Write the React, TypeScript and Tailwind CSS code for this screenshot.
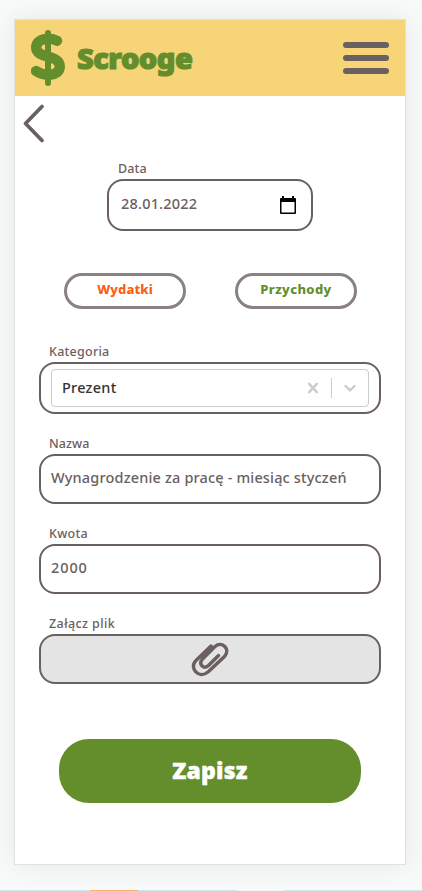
import React from 'react';

const label = 'block h-[20px] pl-[10px] text-[12.5px] leading-[20px] font-medium';
const box = 'flex w-full items-center rounded-[16px] border-2 border-[#6b6060]';

function DollarLogo() {
  return (
    <svg width="34" height="56" viewBox="0 0 34 56" fill="none" stroke="#648e2c" strokeLinecap="round" strokeLinejoin="round">
      <path d="M17 3V53" strokeWidth="6" />
      <path d="M26 10.800C20 7.500 5.200 7.500 5.200 17.500C5.200 29 28.800 24 28.800 36.500C28.800 46.500 13 46.500 5 41" strokeWidth="10.400" />
    </svg>
  );
}

function Calendar() {
  return (
    <svg width="16" height="18" viewBox="0 0 16 18">
      <path fill="#000" fillRule="evenodd" d="M2 0H4V2H12V0H14V2H15Q16 2 16 3V17Q16 18 15 18H1Q0 18 0 17V3Q0 2 1 2H2ZM1.500 6V16.500H14.500V6Z" />
    </svg>
  );
}

function Paperclip() {
  return (
    <svg width="38" height="36" viewBox="0 0 38 36" fill="none" stroke="#6b6060" strokeWidth="3.500" strokeLinecap="round" strokeLinejoin="round">
      <path d="M20 5L5 19.500C-2.500 27 8 38.500 17 31L33.500 15.500C40 8 31 -0.500 24 5.500L11.500 18C7 23.500 13 29 17.500 24.500L27.500 14.500" />
    </svg>
  );
}

export default function App() {
  return (
    <div className="flex h-[891px] w-[422px] flex-col overflow-hidden bg-[#f8faf9] font-['Noto_Sans','Open_Sans',sans-serif] text-[#6b6060]">
      <div className="mt-[19px] ml-[14px] flex h-[846px] w-[392px] shrink-0 flex-col border border-[#e0e1e1] bg-white shadow-[0_0_24px_rgba(0,0,0,0.08)]">
        <header className="flex h-[76px] shrink-0 items-center bg-[#f7d478] pr-4 pl-4">
          <DollarLogo />
          <span className="ml-[12px] text-[29px] leading-[40px] font-black tracking-[-0.5px] text-[#648e2c] [-webkit-text-stroke:1.2px_#648e2c]">Scrooge</span>
          <div className="ml-auto flex flex-col gap-[7px]">
            <i className="h-[6px] w-[46px] rounded-full bg-[#6b6060]" />
            <i className="h-[6px] w-[46px] rounded-full bg-[#6b6060]" />
            <i className="h-[6px] w-[46px] rounded-full bg-[#6b6060]" />
          </div>
        </header>
        <div className="h-[63px] pt-[7px] pl-[7px]">
          <svg width="24" height="42" viewBox="0 0 24 42" fill="none" stroke="#6b6060" strokeWidth="3.800" strokeLinecap="round" strokeLinejoin="round">
            <path d="M20 3.500L3.500 20.500L20 37.500" />
          </svg>
        </div>
        <div className="ml-[92px] w-[206px]">
          <span className={`${label} tracking-[0.1px] indent-[1px]`}>Data</span>
          <div className={`${box} h-[52px] justify-between pr-[15px] pl-[12px]`}>
            <span className="-mt-[2px] text-[14.5px] font-medium tracking-[0.2px]">28.01.2022</span>
            <Calendar />
          </div>
        </div>
        <div className="mt-[42px] ml-[49px] flex gap-[49px] text-[13px] font-extrabold">
          <div className="flex h-[36px] w-[122px] items-center justify-center rounded-full border-3 border-[#8a8282] pb-[2px] tracking-[0.1px] text-[#fd5c14]">Wydatki</div>
          <div className="flex h-[36px] w-[122px] items-center justify-center rounded-full border-3 border-[#8a8282] pb-[2px] tracking-[0.4px] text-[#648e2c]">Przychody</div>
        </div>
        <main className="mx-6 mt-[33px] flex flex-col gap-5">
          <div>
            <span className={`${label} tracking-[0.25px]`}>Kategoria</span>
            <div className={`${box} h-[52px] px-[10px]`}>
              <div className="flex h-[38px] w-full items-center rounded-[4px] border border-[#ccc] pl-[10px]">
                <span className="text-[14.5px] font-medium tracking-[0.25px] text-[#333]">Prezent</span>
                <svg className="ml-auto" width="12" height="12" viewBox="0 0 12 12" stroke="#ccc" strokeWidth="2.500" strokeLinecap="round">
                  <path d="M2.200 1.800L9.800 10.200M9.800 1.800L2.200 10.200" />
                </svg>
                <i className="ml-[12px] h-[20px] w-px bg-[#ccc]" />
                <svg className="mr-[12px] ml-[12px]" width="12" height="8" viewBox="0 0 12 8" fill="none" stroke="#ccc" strokeWidth="2.400" strokeLinecap="round" strokeLinejoin="round">
                  <path d="M1.500 2L6 6.300L10.500 2" />
                </svg>
              </div>
            </div>
          </div>
          <div>
            <span className={`${label} tracking-[0.1px]`}>Nazwa</span>
            <div className={`${box} h-[50px] px-[10px]`}>
              <span className="-mt-[2px] text-[14.5px] font-medium tracking-[0.16px] whitespace-nowrap">Wynagrodzenie za pracę - miesiąc styczeń</span>
            </div>
          </div>
          <div>
            <span className={`${label} tracking-[0.25px]`}>Kwota</span>
            <div className={`${box} h-[50px] px-[10px]`}>
              <span className="-mt-[2px] text-[14.5px] font-medium tracking-[0.9px]">2000</span>
            </div>
          </div>
          <div>
            <span className={`${label} tracking-[0.4px]`}>Załącz plik</span>
            <div className={`${box} h-[50px] justify-center bg-[#e4e4e4]`}>
              <Paperclip />
            </div>
          </div>
        </main>
        <button className="mt-[55px] ml-[44px] h-[64px] w-[302px] rounded-[30px] bg-[#648e2c] pb-[2px] text-[23px] font-black tracking-[0.2px] text-white [-webkit-text-stroke:0.4px_#fff]">Zapisz</button>
      </div>
      <div className="mt-auto flex h-px bg-[#cbe8ee]">
        <i className="ml-[90px] h-px w-[48px] bg-[#f8b277]" />
        <i className="ml-[99px] h-px w-[48px] bg-[#eef4f8]" />
      </div>
    </div>
  );
}
